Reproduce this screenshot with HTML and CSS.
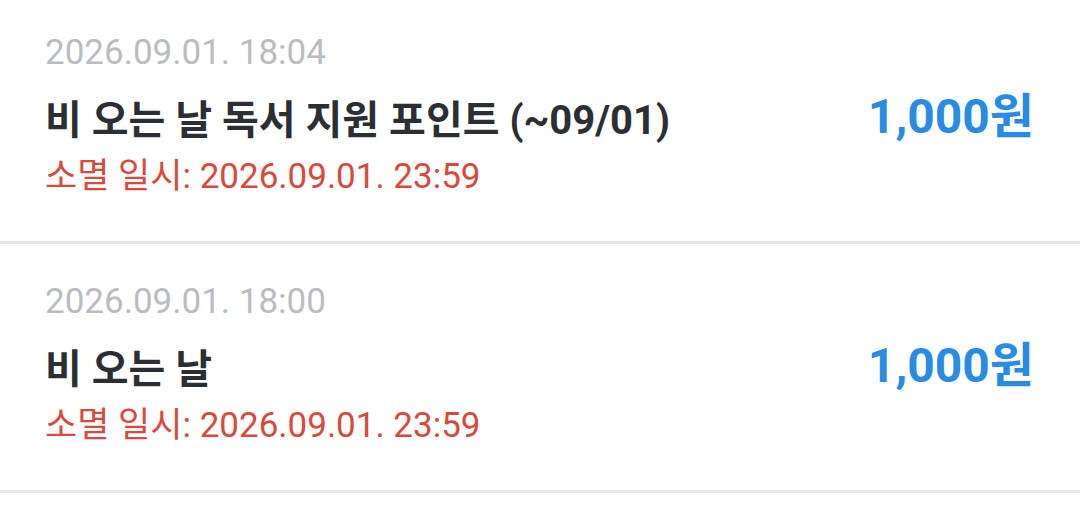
FILE: index.html
```html
<!DOCTYPE html>
<html lang="ko">
<head>
    <meta charset="UTF-8">
    <meta name="viewport" content="width=device-width, initial-scale=1.0">
    <title>포인트 내역</title>
    <link rel="stylesheet" href="styles.css">
</head>
<body>
    <ul class="point-list">
        <li class="point-item">
            <div class="point-info">
                <div class="point-date">2026.09.01. 18:04</div>
                <div class="point-title">비 오는 날 독서 지원 포인트 (~09/01)</div>
                <div class="point-expire">소멸 일시: 2026.09.01. 23:59</div>
            </div>
            <div class="point-amount">1,000원</div>
        </li>
        <li class="point-item">
            <div class="point-info">
                <div class="point-date">2026.09.01. 18:00</div>
                <div class="point-title">비 오는 날</div>
                <div class="point-expire">소멸 일시: 2026.09.01. 23:59</div>
            </div>
            <div class="point-amount">1,000원</div>
        </li>
    </ul>
</body>
</html>
```

FILE: styles.css
```css
body {
    margin: 0;
    background-color: #ffffff;
    font-family: Roboto, "Noto Sans CJK KR", sans-serif;
}

.point-list {
    list-style: none;
    margin: -5px 0 0 0;
    padding: 0;
}

.point-item {
    display: flex;
    align-items: flex-start;
    justify-content: space-between;
    height: 249px;
    box-sizing: border-box;
    padding: 34px 46px 0 45px;
    border-bottom: 3px solid #e6e7ea;
}

.point-info {
    display: flex;
    flex-direction: column;
}

.point-date {
    font-size: 35px;
    line-height: 48px;
    color: #b9bdc2;
}

.point-title {
    margin: 14px 0 2px;
    font-size: 40px;
    line-height: 60px;
    font-weight: bold;
    color: #2b2f33;
}

.point-expire {
    font-size: 35px;
    line-height: 48px;
    color: #d84a3d;
}

.point-amount {
    margin-top: 56px;
    font-size: 48px;
    line-height: 64px;
    font-weight: bold;
    color: #2a8be2;
}
```
